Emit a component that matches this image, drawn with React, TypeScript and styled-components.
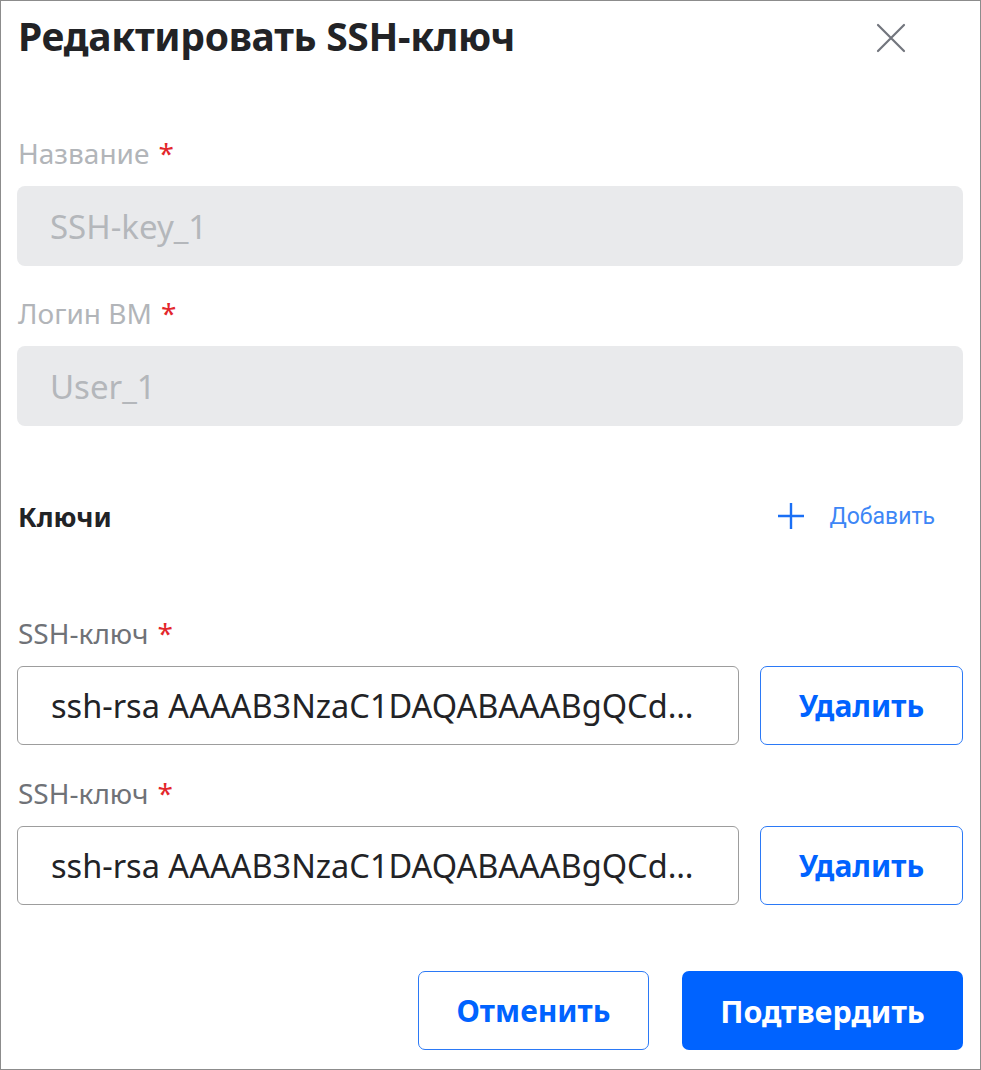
import React from 'react';
import styled, { createGlobalStyle } from 'styled-components';

const GlobalStyle = createGlobalStyle`
  html, body {
    margin: 0;
    padding: 0;
    background: #ffffff;
  }
  * {
    box-sizing: border-box;
  }
`;

const Dialog = styled.div`
  width: 981px;
  height: 1070px;
  border: 1px solid #8c8c8c;
  padding: 0 17px 0 16px;
  background: #ffffff;
  font-family: 'Noto Sans', 'Open Sans', sans-serif;
  display: flex;
  flex-direction: column;
`;

const Header = styled.div`
  height: 68px;
  display: flex;
  align-items: center;
  justify-content: space-between;
`;

const Title = styled.h1`
  margin: 0 0 0 1px;
  font-size: 39px;
  font-weight: 700;
  color: #222326;
  letter-spacing: -0.3px;
`;

const CloseButton = styled.button`
  width: 48px;
  height: 48px;
  margin: 6px 48px 0 0;
  padding: 0;
  border: none;
  background: transparent;
  display: flex;
  align-items: center;
  justify-content: center;
  cursor: pointer;
`;

const Field = styled.div<{ $top: number }>`
  margin-top: ${p => p.$top}px;
  display: flex;
  flex-direction: column;
  gap: 16px;
`;

const Label = styled.label<{ $disabled?: boolean }>`
  height: 34px;
  line-height: 34px;
  padding-left: 1px;
  font-size: 28px;
  color: ${p => (p.$disabled ? '#b2b5b9' : '#6f7277')};
`;

const Required = styled.span`
  color: #e3262b;
  margin-left: 9px;
`;

const ReadonlyInput = styled.div`
  height: 80px;
  border-radius: 8px;
  background: #e9eaec;
  padding-left: 33px;
  display: flex;
  align-items: center;
  font-size: 33px;
  color: #b4b7bb;
`;

const KeyRow = styled.div`
  display: flex;
  gap: 21px;
  height: 79px;
`;

const KeyInput = styled.div`
  flex: 1;
  min-width: 0;
  border: 1px solid #9d9d9d;
  border-radius: 6px;
  padding: 0 36px 0 33px;
  display: flex;
  align-items: center;
  font-size: 32.5px;
  color: #222326;
  overflow: hidden;

  span {
    overflow: hidden;
    white-space: nowrap;
    text-overflow: ellipsis;
  }
`;

const OutlineButton = styled.button<{ $width: number }>`
  width: ${p => p.$width}px;
  flex-shrink: 0;
  border: 1px solid #2b79f6;
  border-radius: 7px;
  background: #ffffff;
  color: #0063ff;
  font-family: 'Noto Sans', sans-serif;
  font-size: 30px;
  font-weight: 700;
  cursor: pointer;
`;

const SectionRow = styled.div`
  margin-top: 70px;
  height: 40px;
  display: flex;
  align-items: center;
  justify-content: space-between;
`;

const SectionTitle = styled.h2`
  margin: 0 0 0 1px;
  font-size: 27px;
  font-weight: 700;
  color: #222326;
`;

const AddButton = styled.button`
  display: flex;
  align-items: center;
  gap: 24px;
  margin-right: 28px;
  padding: 0;
  border: none;
  background: transparent;
  font-family: Roboto, sans-serif;
  font-size: 23px;
  color: #3d86f6;
  cursor: pointer;
`;

const Footer = styled.div`
  margin-top: 66px;
  display: flex;
  justify-content: flex-end;
  gap: 33px;
  height: 79px;
`;

const PrimaryButton = styled.button`
  width: 281px;
  border: none;
  border-radius: 7px;
  background: #0063ff;
  color: #ffffff;
  font-family: 'Noto Sans', sans-serif;
  font-size: 30.5px;
  font-weight: 700;
  cursor: pointer;
`;

const keyText = 'ssh-rsa AAAAB3NzaC1DAQABAAABgQCdJx7mWq4v0pLr9sKfT2';

export default function App() {
  return (
    <>
      <GlobalStyle />
      <Dialog>
        <Header>
          <Title>Редактировать SSH-ключ</Title>
          <CloseButton aria-label="Закрыть">
            <svg width="30" height="30" viewBox="0 0 30 30">
              <path d="M2 2 L28 28 M28 2 L2 28" stroke="#72757d" strokeWidth="2.2" strokeLinecap="round" />
            </svg>
          </CloseButton>
        </Header>

        <Field $top={67}>
          <Label $disabled>
            Название<Required>*</Required>
          </Label>
          <ReadonlyInput>SSH-key_1</ReadonlyInput>
        </Field>

        <Field $top={30}>
          <Label $disabled>
            Логин ВМ<Required>*</Required>
          </Label>
          <ReadonlyInput>User_1</ReadonlyInput>
        </Field>

        <SectionRow>
          <SectionTitle>Ключи</SectionTitle>
          <AddButton>
            <svg width="28" height="28" viewBox="0 0 28 28">
              <path d="M14 1 V27 M1 14 H27" stroke="#1a6ff5" strokeWidth="2.4" />
            </svg>
            Добавить
          </AddButton>
        </SectionRow>

        <Field $top={80}>
          <Label>
            SSH-ключ<Required>*</Required>
          </Label>
          <KeyRow>
            <KeyInput>
              <span>{keyText}</span>
            </KeyInput>
            <OutlineButton $width={203}>Удалить</OutlineButton>
          </KeyRow>
        </Field>

        <Field $top={31}>
          <Label>
            SSH-ключ<Required>*</Required>
          </Label>
          <KeyRow>
            <KeyInput>
              <span>{keyText}</span>
            </KeyInput>
            <OutlineButton $width={203}>Удалить</OutlineButton>
          </KeyRow>
        </Field>

        <Footer>
          <OutlineButton $width={231}>Отменить</OutlineButton>
          <PrimaryButton>Подтвердить</PrimaryButton>
        </Footer>
      </Dialog>
    </>
  );
}
